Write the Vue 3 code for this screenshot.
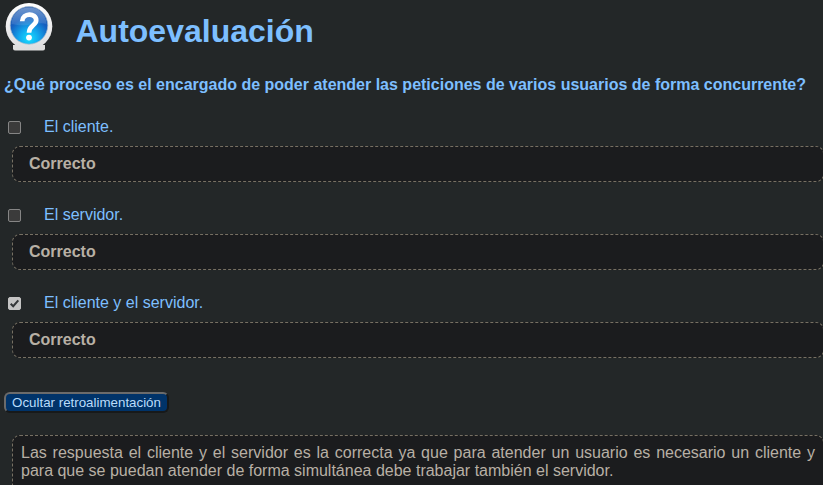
<script setup>
import { ref } from 'vue'

const options = ref([
  { text: 'El cliente.', checked: false },
  { text: 'El servidor.', checked: false },
  { text: 'El cliente y el servidor.', checked: true },
])
</script>

<template>
  <main class="page">
    <header class="head">
      <svg class="icon" width="50" height="50" viewBox="0 0 50 50">
        <defs>
          <linearGradient id="ring" x1="0" y1="0" x2="0" y2="1">
            <stop offset="0" stop-color="#ffffff" />
            <stop offset="1" stop-color="#dcdcde" />
          </linearGradient>
          <radialGradient id="ball" cx=".5" cy=".85" r=".85">
            <stop offset="0" stop-color="#16e0ff" />
            <stop offset=".3" stop-color="#13a9ee" />
            <stop offset=".65" stop-color="#155fc0" />
            <stop offset="1" stop-color="#2058ac" />
          </radialGradient>
          <linearGradient id="shine" x1="0" y1="0" x2="0" y2="1">
            <stop offset="0" stop-color="#fff" stop-opacity=".36" />
            <stop offset="1" stop-color="#fff" stop-opacity=".1" />
          </linearGradient>
        </defs>
        <path d="M9 43h32v4q-.500 1.500-2.500 1.500H11.500q-2 0-2.500-1.500z" fill="#dedede" />
        <circle cx="25" cy="24.300" r="23.3" fill="url(#ring)" />
        <circle cx="25" cy="23.400" r="18.800" fill="url(#ball)" stroke="#a9bccd" stroke-width=".7" />
        <path d="M7.500 22C8 11 16 5.500 25 5.500S42 11 42.500 22C34 19 25 26 7.500 22z" fill="url(#shine)" />
        <path d="M18.200 19.200C18.400 10.800 32.200 10.600 32.200 18.300C32.200 23.500 25 23.200 25 30.800" fill="none" stroke="#fff" stroke-width="4.700" />
        <circle cx="25" cy="35.600" r="2.900" fill="#fff" />
      </svg>
      <h1>Autoevaluación</h1>
    </header>
    <p class="question">¿Qué proceso es el encargado de poder atender las peticiones de varios usuarios de forma concurrente?</p>
    <section v-for="o in options" :key="o.text" class="option">
      <label class="answer">
        <input v-model="o.checked" type="checkbox" />
        <svg class="check" width="13" height="13" viewBox="0 0 13 13">
          <rect x=".5" y=".5" width="12" height="12" rx="1.500" :fill="o.checked ? '#c4c4c4' : '#3b3b3b'" :stroke="o.checked ? '#c4c4c4' : '#858585'" />
          <path v-if="o.checked" d="M2.700 6.700L5.200 9.200L10.300 3.300" fill="none" stroke="#333638" stroke-width="2" />
        </svg>
        <span>{{ o.text }}</span>
      </label>
      <div class="box result">Correcto</div>
    </section>
    <button class="toggle" type="button">Ocultar retroalimentación</button>
    <div class="box feedback">Las respuesta el cliente y el servidor es la correcta ya que para atender un usuario es necesario un cliente y para que se puedan atender de forma simultánea debe trabajar también el servidor.</div>
  </main>
</template>

<style>
body {
  background: #232728;
  overflow: hidden;
}
</style>

<style scoped>
.page {
  height: 485px;
  overflow: hidden;
  box-sizing: border-box;
  padding-left: 4px;
  background: #232728;
  color: #7dbfff;
  font: 16px/18px "Liberation Sans", Arial, sans-serif;
}
.head {
  display: flex;
  height: 76px;
}
.icon {
  margin: 2px 0 0;
  flex: none;
}
h1 {
  margin: 13px 0 0 21.5px;
  font-size: 32px;
  line-height: 37px;
}
.question {
  margin: 0;
  height: 42px;
  font-weight: bold;
  white-space: nowrap;
}
.option {
  height: 88px;
}
.answer {
  display: flex;
  height: 28px;
  padding-left: 4px;
}
.answer input {
  appearance: none;
  width: 0;
  height: 0;
  margin: 0;
}
.check {
  margin: 3px 23px 0 0;
  flex: none;
}
.box {
  box-sizing: border-box;
  margin-left: 8px;
  width: 812px;
  background: #1b1c1e;
  border: 1px dashed #777063;
  border-radius: 8px;
  color: #b8b0a5;
}
.result {
  height: 36px;
  padding: 8px 16px;
  font-weight: bold;
}
.toggle {
  display: block;
  box-sizing: border-box;
  width: 165px;
  height: 21px;
  margin: 10px 0 0;
  padding: 0;
  background: #003369;
  border: 2px solid;
  border-color: #6b6b6b #17191a #17191a #6b6b6b;
  border-radius: 6px;
  color: #b9dcfb;
  font: 13.333px/17px "Liberation Sans", Arial, sans-serif;
  white-space: nowrap;
}
.feedback {
  height: 80px;
  margin-top: 22px;
  padding: 8px;
  text-align: justify;
}
</style>
